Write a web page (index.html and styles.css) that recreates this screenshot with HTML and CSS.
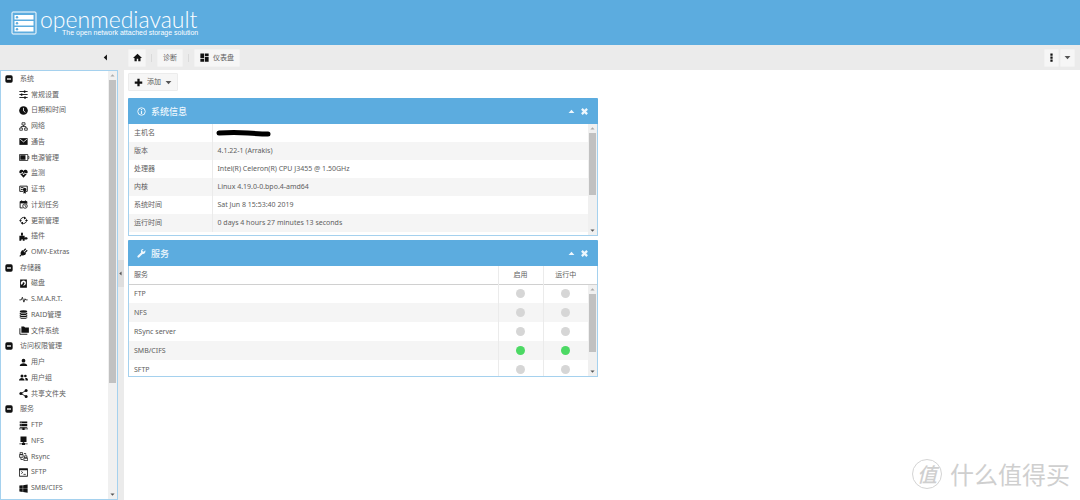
FILE: index.html
```html
<!DOCTYPE html>
<html lang="zh-CN">
<head>
<meta charset="utf-8">
<meta name="viewport" content="width=device-width, initial-scale=1">
<title>openmediavault</title>
<link rel="stylesheet" href="styles.css">
</head>
<body>
<svg class="sprite" aria-hidden="true">
  <symbol id="i-sliders" viewBox="0 0 24 24"><path d="M1 4h22M1 12h22M1 20h22" stroke="currentColor" stroke-width="2.400"/><path d="M13 1h4v6h-4zM5 9h4v6H5zM14 17h4v6h-4z"/></symbol>
  <symbol id="i-clock" viewBox="0 0 24 24"><circle cx="12" cy="12" r="11.500"/><path d="M12 5v8l5 4" fill="none" stroke="#fff" stroke-width="2.200"/></symbol>
  <symbol id="i-network" viewBox="0 0 24 24"><g fill="none" stroke="currentColor" stroke-width="2"><path d="M8 2h8v6H8zM2 16h7v6H2zM15 16h7v6h-7zM12 8v4M5.500 16v-4h13v4"/></g></symbol>
  <symbol id="i-mail" viewBox="0 0 24 24"><path d="M1 3h22v18H1z"/><path d="M3 6l9 7 9-7" fill="none" stroke="#fff" stroke-width="2.200"/></symbol>
  <symbol id="i-battery" viewBox="0 0 28 24"><path d="M2 4h22v16H2zM25 9h2v6h-2" fill="none" stroke="currentColor" stroke-width="2"/><path d="M4 6h14v12H4z"/></symbol>
  <symbol id="i-heart" viewBox="0 0 24 24"><path d="M12 23L2 12C-1 6 3 1 7 2c2 0 4 1 5 3 1-2 3-3 5-3 4-1 8 4 5 10z"/><path d="M0 12h7l2-4 3 8 3-6 1 2h8" fill="none" stroke="#fff" stroke-width="2"/></symbol>
  <symbol id="i-cert" viewBox="0 0 24 24"><path d="M2 3h20v14h-4M2 3v14h9M5 7h7M5 12h5" fill="none" stroke="currentColor" stroke-width="2.400"/><circle cx="15" cy="12" r="4.500"/><path d="M12 14h6v9l-3-2-3 2z"/></symbol>
  <symbol id="i-calendar" viewBox="0 0 24 24"><path d="M3 4h18v6M3 4v17h7M7 1v4M17 1v4" fill="none" stroke="currentColor" stroke-width="2.400"/><path d="M3 4h18v5H3z"/><circle cx="16" cy="16" r="6" fill="none" stroke="currentColor" stroke-width="2.200"/><path d="M16 12v4l3 2" fill="none" stroke="currentColor" stroke-width="2"/></symbol>
  <symbol id="i-refresh" viewBox="0 0 24 24"><path d="M4 13a8 8 0 0 1 12-8M20 11a8 8 0 0 1-12 8" fill="none" stroke="currentColor" stroke-width="2.400"/><path d="M14 1l6 5-7 3zM10 23l-6-5 7-3zM0 11h8l-4 5zM24 13h-8l4-5z"/></symbol>
  <symbol id="i-puzzle" viewBox="0 0 24 24"><path d="M1 10h6c-3-4-2-9 1-9s4 5 1 9h6v5c3-2 8-1 8 2s-5 4-8 2v4h-5c1-5-4-5-4 0H1z"/></symbol>
  <symbol id="i-plug" viewBox="0 0 24 24"><path d="M9 5l10 10c-4 5-8 6-12 4l-4 4-2-2 4-4C3 13 5 9 9 5z"/><path d="M12 8l6-6M16 12l6-6" stroke="currentColor" stroke-width="3"/></symbol>
  <symbol id="i-disk" viewBox="0 0 24 24"><path fill-rule="evenodd" d="M3 1h18v22H3zM12 4a7 7 0 0 0-5 12l3-4a2.500 2.500 0 1 1 4 1l-3 5A7 7 0 0 0 12 4z"/></symbol>
  <symbol id="i-pulse" viewBox="0 0 24 24"><path d="M1 13h5l3-7 4 13 3-9 2 3h5" fill="none" stroke="currentColor" stroke-width="2.200"/></symbol>
  <symbol id="i-database" viewBox="0 0 24 24"><ellipse cx="12" cy="4" rx="10" ry="3.500"/><path d="M2 7c4 3 16 3 20 0v4c-3 3-17 3-20 0zM2 13c4 3 16 3 20 0v4c-3 3-17 3-20 0zM2 19c4 3 16 3 20 0v2c-3 3-17 3-20 0z"/></symbol>
  <symbol id="i-folders" viewBox="0 0 28 24"><path d="M7 1h7l3 3h10v14H7z"/><path d="M3 6v16h20" fill="none" stroke="currentColor" stroke-width="2.400"/></symbol>
  <symbol id="i-user" viewBox="0 0 24 24"><circle cx="12" cy="7" r="5"/><path d="M2 21c0-9 20-9 20 0z"/></symbol>
  <symbol id="i-users" viewBox="0 0 24 24"><circle cx="8" cy="8" r="4"/><circle cx="17" cy="8" r="3.500"/><path d="M0 20c0-9 15-9 15 0zM17 20h7c0-6-4-7-8-6 1 1 2 3 1 6z"/></symbol>
  <symbol id="i-share" viewBox="0 0 24 24"><circle cx="5" cy="12" r="4"/><circle cx="19" cy="4" r="4"/><circle cx="19" cy="20" r="4"/><path d="M19 4L5 12l14 8" fill="none" stroke="currentColor" stroke-width="2.200"/></symbol>
  <symbol id="i-server" viewBox="0 0 24 24"><path d="M2 1h20v5H2zM2 8h20v5H2zM2 15h20v3H2zM0 20h24v2H0z"/><path d="M4 3.500h3M4 10.500h3" stroke="#fff" stroke-width="1.500"/><path d="M9 18h6v6H9z"/></symbol>
  <symbol id="i-nfs" viewBox="0 0 24 24"><path d="M4 1h16v15H4zM11 16h2v4h-2zM1 20h22v2H1zM8 18h8v6H8z"/></symbol>
  <symbol id="i-rsync" viewBox="0 0 24 24"><g fill="none" stroke="currentColor" stroke-width="2"><path d="M1 7h10v7H1zM3 1h6v6H3zM13 16h10v7H13zM15 10h6v6h-6zM13 4h5v3M5 14v6h6"/></g></symbol>
  <symbol id="i-terminal" viewBox="0 0 24 24"><path d="M1 2h22v20H1z" fill="none" stroke="currentColor" stroke-width="2.400"/><path d="M1 2h22v4H1z"/><path d="M6 9l4 3-4 3M12 17h6" fill="none" stroke="currentColor" stroke-width="2"/></symbol>
  <symbol id="i-windows" viewBox="0 0 24 24"><path d="M1 4l9-1v8H1zM11 3l12-2v10H11zM1 12h9v9l-9-1zM11 12h12v11l-12-2z"/></symbol>
  <symbol id="i-minus" viewBox="0 0 24 24"><rect x="1" y="1" width="22" height="22" rx="5"/><path d="M6 12h12" stroke="#fff" stroke-width="4"/></symbol>
  <symbol id="i-home" viewBox="0 0 24 24"><path d="M12 2L0 13h4v9h6v-7h4v7h6v-9h4z"/></symbol>
  <symbol id="i-dash" viewBox="0 0 24 24"><path d="M1 1h10v12H1zM13 1h10v7H13zM1 15h10v8H1zM13 10h10v13H13z"/></symbol>
  <symbol id="i-plus" viewBox="0 0 24 24"><path d="M9 2h6v7h7v6h-7v7H9v-7H2V9h7z"/></symbol>
  <symbol id="i-dots" viewBox="0 0 24 24"><path d="M9 1h6v6H9zM9 9h6v6H9zM9 17h6v6H9z"/></symbol>
  <symbol id="i-down" viewBox="0 0 24 24"><path d="M2 7h20L12 18z"/></symbol>
  <symbol id="i-up" viewBox="0 0 24 24"><path d="M2 17h20L12 6z"/></symbol>
  <symbol id="i-left" viewBox="0 0 24 24"><path d="M17 2v20L6 12z"/></symbol>
  <symbol id="i-close" viewBox="0 0 24 24"><path d="M5 5l14 14M19 5L5 19" stroke="currentColor" stroke-width="6"/></symbol>
  <symbol id="i-info" viewBox="0 0 24 24"><circle cx="12" cy="12" r="10" fill="none" stroke="currentColor" stroke-width="2.600"/><path d="M10.500 5.500h3v3h-3zM10.500 10.500h3v8h-3z"/></symbol>
  <symbol id="i-wrench" viewBox="0 0 24 24"><path d="M22 3l-4 4-3-1-1-3 4-3c-5-1-9 4-7 9l-9 9c-3 3 1 7 4 4l9-9c5 1 9-4 7-10z"/></symbol>
</svg>

<header class="banner">
  <svg class="logo" viewBox="0 0 26 24" aria-hidden="true">
    <rect x="1" y="1" width="24" height="22" rx="1" fill="none" stroke="currentColor"/>
    <path d="M3.500 4h19v4.400h-19zM3.500 10h19v4.400h-19zM3.500 16h19v4.400h-19z"/>
    <g fill="#5cacdf"><circle cx="6" cy="6.200" r="1.200"/><circle cx="6" cy="12.200" r="1.200"/><circle cx="6" cy="18.200" r="1.200"/></g>
  </svg>
  <div class="brand">
    <h1 class="brand-name">openmediavault</h1>
    <p class="brand-tag">The open network attached storage solution</p>
  </div>
</header>

<div class="toolbar">
  <div class="toolbar-side"><button class="bare" aria-label="收起"><svg class="icon small"><use href="#i-left"/></svg></button></div>
  <nav class="crumbs">
    <button class="btn" aria-label="主页"><svg class="icon"><use href="#i-home"/></svg></button>
    <span class="sep"></span>
    <button class="btn">诊断</button>
    <span class="sep"></span>
    <button class="btn"><svg class="icon"><use href="#i-dash"/></svg>仪表盘</button>
  </nav>
  <div class="tools">
    <button class="btn tool" aria-label="菜单"><svg class="icon"><use href="#i-dots"/></svg></button>
    <button class="btn tool" aria-label="更多"><svg class="icon small soft"><use href="#i-down"/></svg></button>
  </div>
</div>

<div class="workspace">
  <aside class="sidebar">
    <nav class="tree">
      <button class="group"><svg class="icon mini"><use href="#i-minus"/></svg>系统</button>
      <a class="leaf" href="#"><svg class="icon"><use href="#i-sliders"/></svg>常规设置</a>
      <a class="leaf" href="#"><svg class="icon"><use href="#i-clock"/></svg>日期和时间</a>
      <a class="leaf" href="#"><svg class="icon"><use href="#i-network"/></svg>网络</a>
      <a class="leaf" href="#"><svg class="icon"><use href="#i-mail"/></svg>通告</a>
      <a class="leaf" href="#"><svg class="icon wide"><use href="#i-battery"/></svg>电源管理</a>
      <a class="leaf" href="#"><svg class="icon"><use href="#i-heart"/></svg>监测</a>
      <a class="leaf" href="#"><svg class="icon"><use href="#i-cert"/></svg>证书</a>
      <a class="leaf" href="#"><svg class="icon"><use href="#i-calendar"/></svg>计划任务</a>
      <a class="leaf" href="#"><svg class="icon"><use href="#i-refresh"/></svg>更新管理</a>
      <a class="leaf" href="#"><svg class="icon"><use href="#i-puzzle"/></svg>插件</a>
      <a class="leaf" href="#"><svg class="icon"><use href="#i-plug"/></svg>OMV-Extras</a>
      <button class="group"><svg class="icon mini"><use href="#i-minus"/></svg>存储器</button>
      <a class="leaf" href="#"><svg class="icon"><use href="#i-disk"/></svg>磁盘</a>
      <a class="leaf" href="#"><svg class="icon"><use href="#i-pulse"/></svg>S.M.A.R.T.</a>
      <a class="leaf" href="#"><svg class="icon"><use href="#i-database"/></svg>RAID管理</a>
      <a class="leaf" href="#"><svg class="icon wide"><use href="#i-folders"/></svg>文件系统</a>
      <button class="group"><svg class="icon mini"><use href="#i-minus"/></svg>访问权限管理</button>
      <a class="leaf" href="#"><svg class="icon"><use href="#i-user"/></svg>用户</a>
      <a class="leaf" href="#"><svg class="icon"><use href="#i-users"/></svg>用户组</a>
      <a class="leaf" href="#"><svg class="icon"><use href="#i-share"/></svg>共享文件夹</a>
      <button class="group"><svg class="icon mini"><use href="#i-minus"/></svg>服务</button>
      <a class="leaf" href="#"><svg class="icon"><use href="#i-server"/></svg>FTP</a>
      <a class="leaf" href="#"><svg class="icon"><use href="#i-nfs"/></svg>NFS</a>
      <a class="leaf" href="#"><svg class="icon"><use href="#i-rsync"/></svg>Rsync</a>
      <a class="leaf" href="#"><svg class="icon"><use href="#i-terminal"/></svg>SFTP</a>
      <a class="leaf" href="#"><svg class="icon"><use href="#i-windows"/></svg>SMB/CIFS</a>
    </nav>
    <div class="scroll" aria-hidden="true"><svg class="arrow dim"><use href="#i-up"/></svg><div class="track"><div class="thumb thumb-side"></div></div><svg class="arrow"><use href="#i-down"/></svg></div>
  </aside>
  <div class="splitter"><button class="handle" aria-label="折叠侧栏"><svg class="arrow"><use href="#i-left"/></svg></button></div>

  <main class="content">
    <button class="btn add"><svg class="icon"><use href="#i-plus"/></svg>添加<svg class="icon small soft"><use href="#i-down"/></svg></button>
    <div class="columns">
      <div class="column">
        <section class="panel">
          <header class="panel-head">
            <svg class="icon"><use href="#i-info"/></svg><h2>系统信息</h2>
            <button class="bare" aria-label="折叠"><svg class="icon small"><use href="#i-up"/></svg></button>
            <button class="bare" aria-label="关闭"><svg class="icon"><use href="#i-close"/></svg></button>
          </header>
          <div class="panel-body info">
            <table class="grid">
              <tbody>
                <tr><th scope="row">主机名</th><td><svg class="redacted" viewBox="0 0 55 8" role="img" aria-label="已隐藏"><path d="M3 4Q18 3 32 4T52 5" fill="none" stroke="#000" stroke-width="5" stroke-linecap="round"/></svg></td></tr>
                <tr><th scope="row">版本</th><td>4.1.22-1 (Arrakis)</td></tr>
                <tr><th scope="row">处理器</th><td>Intel(R) Celeron(R) CPU J3455 @ 1.50GHz</td></tr>
                <tr><th scope="row">内核</th><td>Linux 4.19.0-0.bpo.4-amd64</td></tr>
                <tr><th scope="row">系统时间</th><td>Sat Jun 8 15:53:40 2019</td></tr>
                <tr><th scope="row">运行时间</th><td>0 days 4 hours 27 minutes 13 seconds</td></tr>
              </tbody>
            </table>
            <div class="scroll" aria-hidden="true"><svg class="arrow dim"><use href="#i-up"/></svg><div class="track"><div class="thumb thumb-info"></div></div><svg class="arrow"><use href="#i-down"/></svg></div>
          </div>
        </section>

        <section class="panel">
          <header class="panel-head">
            <svg class="icon"><use href="#i-wrench"/></svg><h2>服务</h2>
            <button class="bare" aria-label="折叠"><svg class="icon small"><use href="#i-up"/></svg></button>
            <button class="bare" aria-label="关闭"><svg class="icon"><use href="#i-close"/></svg></button>
          </header>
          <div class="panel-body services">
            <table class="grid">
              <thead><tr><th scope="col">服务</th><th scope="col" class="state">启用</th><th scope="col" class="state">运行中</th></tr></thead>
              <tbody>
                <tr><td>FTP</td><td class="state"><i class="dot"></i></td><td class="state"><i class="dot"></i></td></tr>
                <tr><td>NFS</td><td class="state"><i class="dot"></i></td><td class="state"><i class="dot"></i></td></tr>
                <tr><td>RSync server</td><td class="state"><i class="dot"></i></td><td class="state"><i class="dot"></i></td></tr>
                <tr><td>SMB/CIFS</td><td class="state"><i class="dot on"></i></td><td class="state"><i class="dot on"></i></td></tr>
                <tr><td>SFTP</td><td class="state"><i class="dot"></i></td><td class="state"><i class="dot"></i></td></tr>
              </tbody>
            </table>
            <div class="scroll-col"><div class="scroll-head"></div>
              <div class="scroll" aria-hidden="true"><svg class="arrow dim"><use href="#i-up"/></svg><div class="track"><div class="thumb thumb-services"></div></div><svg class="arrow"><use href="#i-down"/></svg></div>
            </div>
          </div>
        </section>
      </div>
    </div>
  </main>
</div>
<div class="watermark"><span class="seal">值</span><span>什么值得买</span></div>
</body>
</html>
```
FILE: styles.css
```css
* { box-sizing: border-box; }
html { height: 100%; }
body {
  margin: 0;
  height: 100%;
  display: flex;
  flex-direction: column;
  position: relative;
  overflow: hidden;
  background: #fff;
  color: #606060;
  font: 7px/10px "Noto Sans", "Noto Sans CJK SC", sans-serif;
}
button { font: inherit; color: inherit; border: 0; padding: 0; background: none; cursor: pointer; }
h1, h2, p { margin: 0; }
svg { fill: currentColor; flex: none; }
.sprite { position: absolute; width: 0; height: 0; }
.icon { width: 9px; height: 9px; color: #111; display: block; }
.icon.wide { width: 12px; margin-left: -1px; margin-right: -2px; }
.icon.small { width: 7px; height: 7px; }
.icon.soft { color: #555; }
.icon.mini { width: 8px; height: 8px; }

.banner {
  flex: none;
  height: 45px;
  padding: 0 11px;
  display: flex;
  align-items: center;
  gap: 3px;
  background: #5cacdf;
  color: #fff;
}
.logo { width: 26px; height: 24px; }
.brand { padding-top: 1px; }
.brand-name { font: 300 23px/20px Lato, sans-serif; }
.brand-tag { font: 7px/8px "Liberation Sans", sans-serif; padding-left: 22px; }

.toolbar { flex: none; height: 25px; display: flex; align-items: center; background: #ebebeb; }
.toolbar-side { flex: none; width: 128px; padding-right: 19px; display: flex; justify-content: flex-end; }
.crumbs { display: flex; align-items: center; gap: 5px; }
.btn {
  height: 18px;
  padding: 0 6px;
  display: flex;
  align-items: center;
  gap: 5px;
  background: #f6f6f6;
  border: 1px solid #f2f2f2;
  border-radius: 1px;
}
.crumbs .btn { padding: 0 5px; gap: 4px; min-width: 18px; justify-content: center; }
.crumbs .btn:first-child { padding: 0 3px; }
.sep { width: 1px; height: 8px; background: #dadada; }
.tools { margin-left: auto; padding-right: 5px; display: flex; gap: 1px; }
.btn.tool { width: 15px; padding: 0; justify-content: center; }

.workspace { flex: 1; min-height: 0; display: flex; }
.sidebar { flex: none; width: 118px; display: flex; border: 1px solid #a5d1ee; background: #fff; }
.tree { flex: 1; min-width: 0; display: grid; grid-auto-rows: 1fr; padding-bottom: 3px; }
.group, .leaf { min-height: 0; display: flex; align-items: center; text-decoration: none; color: inherit; white-space: nowrap; line-height: 10px; }
.group { padding-left: 4px; gap: 7px; }
.leaf { padding-left: 18px; gap: 3px; }

.scroll { flex: 1 0 auto; width: 9px; display: flex; flex-direction: column; align-items: center; background: #f0f0f0; }
.sidebar .scroll, .info .scroll { flex: none; }
.arrow { width: 5px; height: 9px; color: #555; }
.arrow.dim { color: #aaa; }
.track { flex: 1; width: 7px; }
.thumb { background: #c1c1c1; }
.thumb-side { height: 74%; }
.thumb-info { height: 67%; }
.thumb-services { height: 79%; }

.splitter { flex: none; width: 6px; display: flex; align-items: center; background: #ebebeb; }
.handle { width: 6px; height: 27px; margin-bottom: 24px; display: flex; align-items: center; background: #dedede; }

.content { flex: 1; min-width: 0; padding: 3px 4px; }
.btn.add { padding: 0 5px; gap: 4px; border-color: #ececec; }
.columns { display: grid; grid-template-columns: 1fr 1fr; gap: 8px; padding-top: 7px; }
.column { display: grid; gap: 4px; }
.panel { border: 1px solid #a5d1ee; border-top-color: #5cacdf; }
.panel-head { height: 25px; padding: 0 9px; margin: 0 -1px; display: flex; align-items: center; gap: 5px; background: #5cacdf; color: #eef7fd; }
.panel-head .icon { color: #eef7fd; }
.panel-head h2 { font-size: 9px; line-height: 12px; font-weight: 500; margin-right: auto; }
.panel-body { display: flex; overflow: hidden; }
.info { height: 111px; }
.services { height: 110px; }
.grid { flex: 1; border-collapse: collapse; table-layout: fixed; width: 100%; height: max-content; }
.grid th, .grid td { padding: 0 5px; height: 18px; text-align: left; font-weight: 400; white-space: nowrap; }
.grid tbody tr:nth-child(even) { background: #f5f5f5; }
.info th { width: 83px; border-right: 1px solid #ebebeb; }
.redacted { width: 55px; height: 8px; display: block; margin-left: -2px; }
.services td { height: 19px; }
.services thead tr { border-bottom: 1px solid #d0d0d0; }
.services .state { width: 45px; padding: 0; text-align: center; border-left: 1px solid #ebebeb; }
.dot { display: block; width: 9px; height: 9px; margin: 0 auto; border-radius: 50%; background: #d6d6d6; }
.dot.on { background: #4cd964; }
.scroll-col { flex: none; display: flex; flex-direction: column; }
.scroll-head { height: 19px; border-bottom: 1px solid #d0d0d0; }

.watermark {
  position: absolute;
  right: 10px;
  bottom: 10px;
  display: flex;
  align-items: center;
  gap: 8px;
  color: #cfcfcf;
  font: 24px/32px "Noto Sans CJK SC", sans-serif;
}
.seal { width: 30px; height: 30px; display: grid; place-items: center; border: 1px solid #d4d4d4; border-radius: 50%; font-size: 20px; line-height: 28px; font-style: italic; font-weight: 500; }
```
